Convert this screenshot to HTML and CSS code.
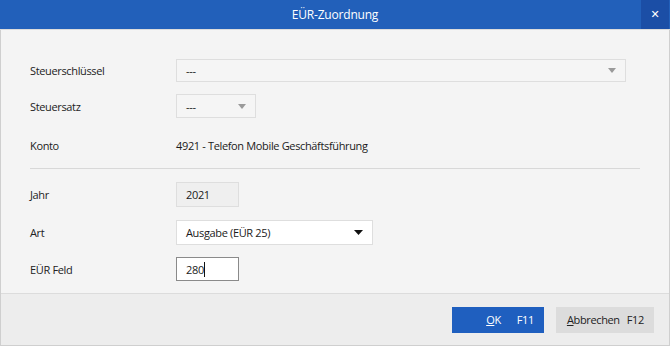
FILE: index.html
```html
<!DOCTYPE html>
<html lang="de">
<head>
    <meta charset="UTF-8">
    <title>EÜR-Zuordnung</title>
    <link rel="stylesheet" href="styles.css">
</head>
<body>
    <div class="dialog">
        <div class="titlebar">
            <span class="title">EÜR-Zuordnung</span>
            <button class="close-button">&#x2715;</button>
        </div>

        <div class="content">
            <div class="row row-1">
                <label>Steuerschlüssel</label>
                <div class="select select-wide">
                    <span>---</span>
                    <svg class="arrow" width="8" height="5" viewBox="0 0 8 5"><path d="M0 0H8L4 5Z" fill="#9a9a9a"/></svg>
                </div>
            </div>
            <div class="row row-2">
                <label>Steuersatz</label>
                <div class="select select-small">
                    <span>---</span>
                    <svg class="arrow" width="8" height="5" viewBox="0 0 8 5"><path d="M0 0H8L4 5Z" fill="#9a9a9a"/></svg>
                </div>
            </div>
            <div class="row row-3">
                <label>Konto</label>
                <span class="value">4921 - Telefon Mobile Geschäftsführung</span>
            </div>

            <div class="separator"></div>

            <div class="row row-4">
                <label>Jahr</label>
                <div class="input input-disabled">2021</div>
            </div>
            <div class="row row-5">
                <label>Art</label>
                <div class="select select-art">
                    <span>Ausgabe (EÜR 25)</span>
                    <svg class="arrow" width="9" height="5" viewBox="0 0 9 5"><path d="M0 0H9L4.5 5Z" fill="#111"/></svg>
                </div>
            </div>
            <div class="row row-6">
                <label>EÜR Feld</label>
                <div class="input input-focus">280<span class="caret"></span></div>
            </div>
        </div>

        <div class="footer">
            <button class="btn btn-ok"><span><u>O</u>K</span><span class="key">F11</span></button>
            <button class="btn btn-cancel"><span><u>A</u>bbrechen</span><span class="key">F12</span></button>
        </div>
    </div>
</body>
</html>
```

FILE: styles.css
```css
body {
    margin: 0;
    padding: 0;
    font-family: 'Open Sans', 'Noto Sans', sans-serif;
    font-size: 11px;
    letter-spacing: -0.35px;
    color: #333;
    background-color: #f4f4f4;
}
.dialog {
    width: 670px;
    height: 346px;
    box-sizing: border-box;
    border: 1px solid #cfcfcf;
    border-top: none;
    display: flex;
    flex-direction: column;
    background-color: #f4f4f4;
}
.titlebar {
    height: 29px;
    margin: 0 -1px;
    background-color: #2260ba;
    border-bottom: 1px solid #dcdcdc;
    display: flex;
    align-items: center;
    justify-content: center;
    position: relative;
}
.title {
    color: white;
    font-size: 12px;
    letter-spacing: -0.2px;
}
.close-button {
    position: absolute;
    top: 0;
    right: 1px;
    width: 28px;
    height: 29px;
    border: none;
    padding: 0;
    background-color: #1b4ea6;
    color: white;
    font-size: 11px;
    font-weight: bold;
    font-family: 'DejaVu Sans', sans-serif;
}
.content {
    flex: 1;
    padding: 29px 29px 0 29px;
}
.row {
    display: flex;
    align-items: center;
}
.row label {
    width: 146px;
    flex-shrink: 0;
    color: #222;
}
.row-1 { height: 23px; margin-bottom: 12px; }
.row-2 { height: 24px; margin-bottom: 15px; }
.row-3 { height: 24px; }
.row-4 { height: 25px; margin-bottom: 13px; }
.row-5 { height: 25px; margin-bottom: 12px; }
.row-6 { height: 24px; }
.value { color: #1a1a1a; }
.separator {
    height: 1px;
    background-color: #d8d8d8;
    margin: 11px 0 13px 0;
}
.select, .input {
    height: 100%;
    box-sizing: border-box;
    border: 1px solid #dedede;
    display: flex;
    align-items: center;
    padding: 0 9px;
    color: #1a1a1a;
}
.select {
    justify-content: space-between;
    background-color: #f5f5f5;
}
.select-wide { width: 450px; }
.select-small { width: 80px; }
.select-art {
    width: 197px;
    background-color: white;
}
.input { width: 63px; }
.input-disabled { background-color: #efefef; }
.input-focus {
    background-color: white;
    border-color: #8a8a8a;
}
.caret {
    display: inline-block;
    width: 1px;
    height: 15px;
    background-color: #111;
}
.footer {
    height: 51px;
    border-top: 1px solid #dcdcdc;
    background-color: #ededed;
    display: flex;
    align-items: center;
    justify-content: flex-end;
    gap: 12px;
    padding-right: 15px;
}
.btn {
    height: 26px;
    border: none;
    display: flex;
    align-items: center;
    justify-content: flex-end;
    padding: 0 10px;
    font-family: 'Open Sans', 'Noto Sans', sans-serif;
    font-size: 11px;
    letter-spacing: -0.35px;
}
.btn-ok {
    width: 92px;
    gap: 16px;
    background-color: #1f5fbf;
    color: white;
}
.btn-cancel {
    width: 98px;
    gap: 7px;
    background-color: #dcdcdc;
    color: #222;
}
```
